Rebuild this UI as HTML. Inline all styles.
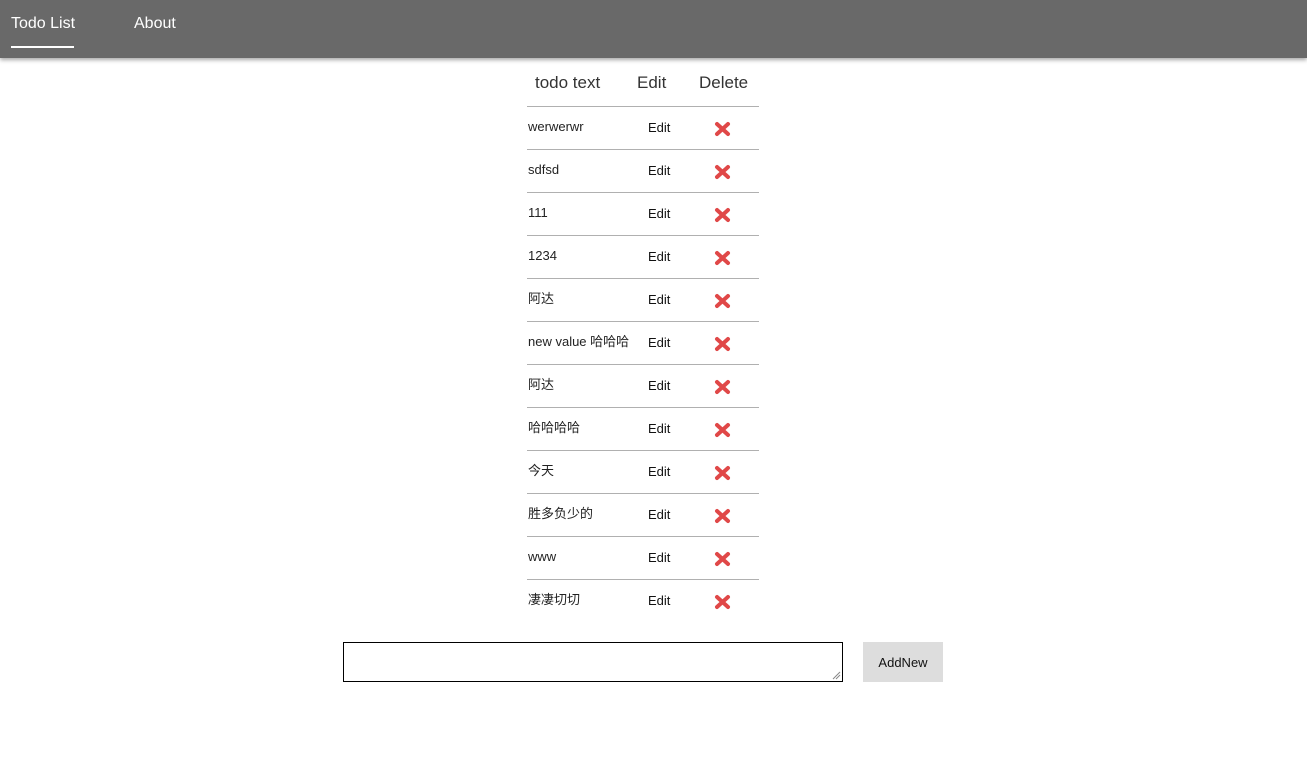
<!DOCTYPE html>
<html><head><meta charset="utf-8"><style>
body{margin:0;width:1307px;height:780px;background:#fff;font-family:"Liberation Sans","Noto Sans CJK SC",sans-serif;position:relative;overflow:hidden}
.nav{position:absolute;left:0;top:0;width:1307px;height:58px;background:#696969;box-shadow:0 2px 4px rgba(0,0,0,.35)}
.nav span{position:absolute;top:15px;color:#fff;font-size:16px}
.ul{position:absolute;left:11px;top:46px;width:63px;height:2px;background:#fff}
.h{position:absolute;top:73px;font-size:17px;color:#333}
.line{position:absolute;left:527px;width:232px;height:1px;background:#b0b0b0}
.t{position:absolute;left:528px;font-size:13px;color:#222;line-height:16px;height:16px}
.e{position:absolute;left:648px;font-size:13px;color:#111;line-height:16px}
.x{position:absolute;left:714px}
</style></head><body>
<div class="nav"><span style="left:11px">Todo List</span><span style="left:134px">About</span><div class="ul"></div></div>
<div class="h" style="left:535px">todo text</div>
<div class="h" style="left:637px">Edit</div>
<div class="h" style="left:699px">Delete</div>
<div id="rows"></div>
<div style="position:absolute;left:343px;top:642px;width:498px;height:38px;border:1px solid #000"></div>
<svg style="position:absolute;left:832px;top:671px" width="9" height="9"><path d="M1 8L8 1M4 8L8 4" stroke="#888" stroke-width="1"/></svg>
<div style="position:absolute;left:863px;top:642px;width:80px;height:40px;background:#ddd;font-size:13px;line-height:41px;text-align:center;color:#111">AddNew</div>
<script>
var items=["werwerwr","sdfsd","111","1234","阿达","new value 哈哈哈","阿达","哈哈哈哈","今天","胜多负少的","www","凄凄切切"];
var h="";
items.forEach(function(s,i){var y=106+43*i;
h+='<div class="line" style="top:'+y+'px"></div>';
h+='<div class="t" style="top:'+(y+13)+'px">'+s+'</div>';
h+='<div class="e" style="top:'+(y+14)+'px">Edit</div>';
h+='<svg class="x" style="top:'+(y+15)+'px" width="17" height="16"><path d="M3 3L14 13M14 3L3 13" stroke="#e04848" stroke-width="4" stroke-linecap="round"/></svg>';});
document.getElementById("rows").innerHTML=h;
</script>
</body></html>
